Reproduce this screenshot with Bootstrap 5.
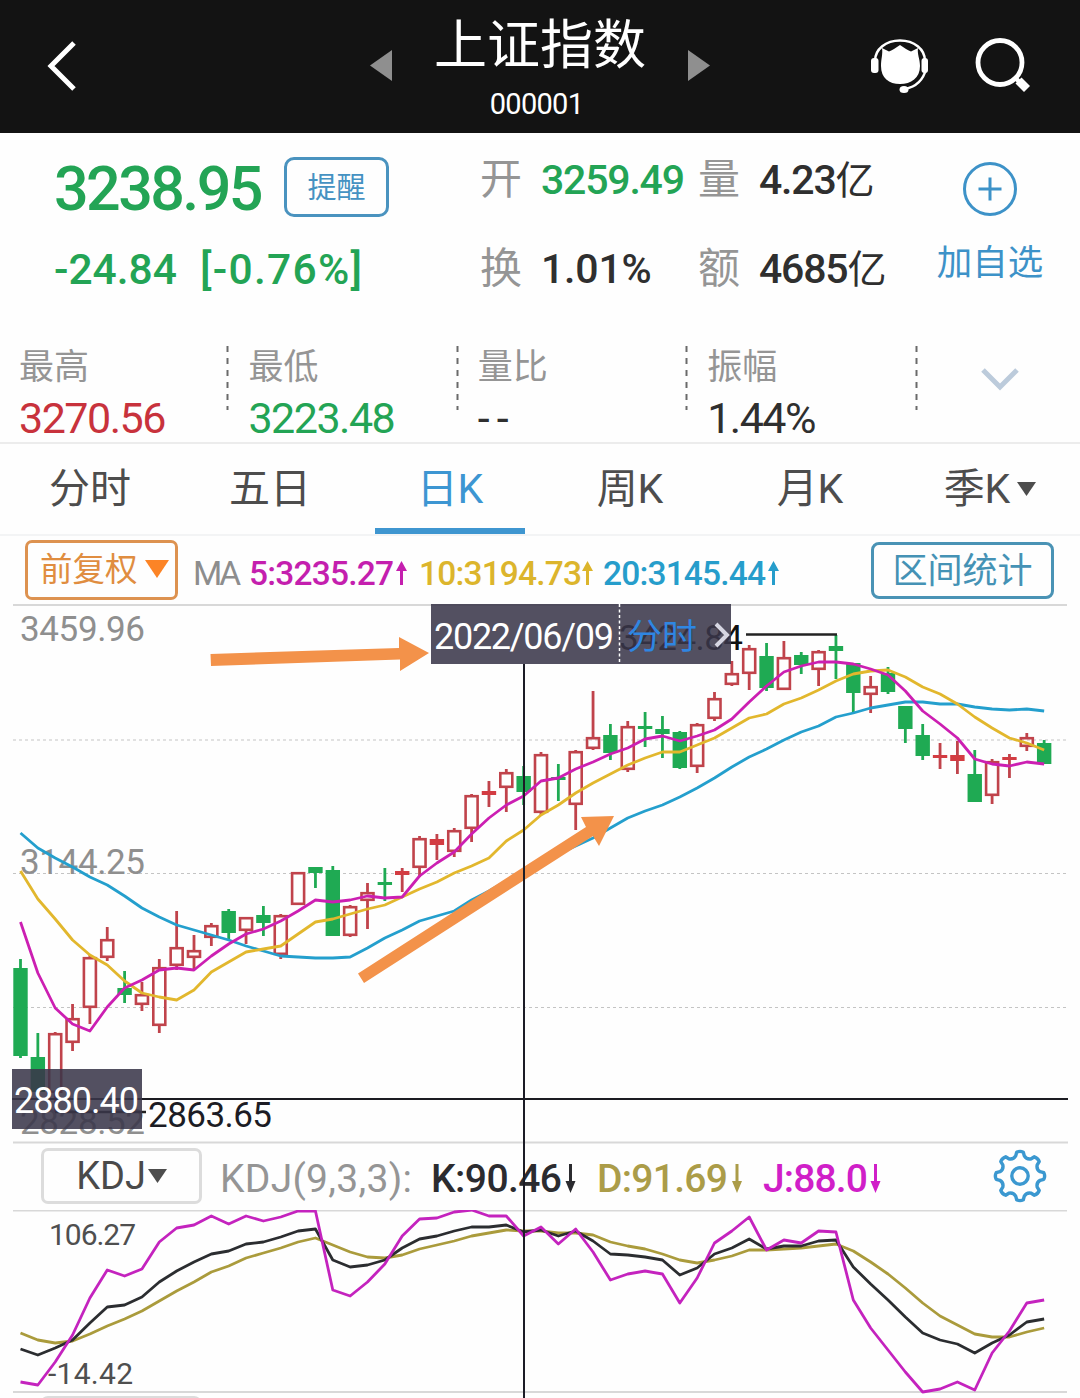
<!DOCTYPE html>
<html lang="zh-CN">
<head>
<meta charset="utf-8">
<meta name="viewport" content="width=device-width, initial-scale=1">
<title>上证指数 000001</title>
<link href="https://cdn.jsdelivr.net/npm/bootstrap@5.3.0/dist/css/bootstrap.min.css" rel="stylesheet">
<style>
body{font-family:Roboto,"Noto Sans CJK SC",sans-serif;color:#2f2f2f;background:#fefefe;line-height:1;width:1080px;height:1398px;overflow:hidden}
svg{display:block;flex:none}
.topbar{height:133px;background:#131313;color:#fff}
.side{width:370px}
.ttl{font-size:53px;line-height:60px;padding-top:16px}
.code{font-size:29px;line-height:30px;letter-spacing:-.7px;margin-top:13px;text-indent:-7px}
.up{color:#c8323c}.down{color:#23a455}.mute{color:#959595}.sky{color:#3d92c8}
.quote{height:213px}
.q-left{width:480px;padding:24px 0 0 54px}
.q-price{font-size:61px;line-height:64px;letter-spacing:-2.6px;font-weight:500;width:230px}
.q-remind{width:105px;height:60px;border:3px solid #4a93bf;border-radius:10px;color:#4592c2;font-size:29px;line-height:57px}
.q-chg{font-size:42.5px;line-height:46px;margin-top:26px;font-weight:500}
.q-chg span:last-child{margin-left:23px;letter-spacing:1.3px}
.q-grid{padding-top:26px;font-size:41px;font-weight:500}
.q-grid .line{height:42px;margin-bottom:47px;line-height:42px}
.q-grid .cap{font-size:42px;font-weight:400;width:61px}
.q-grid .val{letter-spacing:-1.2px;white-space:nowrap}
.q-grid .wide{letter-spacing:-.2px}
.q-grid .cn{font-size:39px;font-weight:400}
.c1{width:218px}.c2{width:228px}
.q-add{width:128px;padding-top:28px;font-size:35.5px}
.stats{height:98px;padding-left:19px;border-bottom:2px solid #ececec}
.stat{width:229.4px}
.stat .lab{font-size:35px;line-height:44px}
.stat .num{font-size:43px;line-height:46px;letter-spacing:-1.5px;margin-top:5px}
.stat .dash{letter-spacing:7px}
.stat svg{margin-left:auto;margin-right:19px}
.tabs{height:92px;border-bottom:2px solid #f3f4f5;font-size:41px;color:#4d4d4d}
.tabs a{width:180px;color:inherit;text-decoration:none;height:90px;line-height:91px}
.tabs a.on{color:#3d96d2}
.tabs a.on::after{content:"";position:absolute;left:15px;right:15px;bottom:0;height:6px;background:#3f96d0}
.marow{height:68px;padding-left:25px}
.adj{width:153px;height:60px;border:3px solid #dd9250;border-radius:7px;color:#e08d40;font-size:32.5px;line-height:58px}
.rng{width:183px;height:57px;border:3px solid #4a93b5;border-radius:8px;color:#4592b5;font-size:35px;line-height:53px}
.kdjrow{height:66px;padding-left:41px;font-size:38px}
.sel{width:161px;height:56px;border:3px solid #dcdcdc;border-radius:7px;color:#4a4a4a;line-height:54px}
.chart{position:relative}
.cross{position:absolute;left:523px;top:60px;bottom:0;width:2px;background:#1c1c26}
svg text{font-family:Roboto,"Noto Sans CJK SC",sans-serif}
</style>
<script src="https://cdn.jsdelivr.net/npm/bootstrap@5.3.0/dist/js/bootstrap.bundle.min.js"></script>
</head>
<body>
<header class="topbar d-flex">
  <div class="side d-flex align-items-center">
    <svg width="40" height="56" viewBox="0 1 40 56" style="margin-left:44px"><path d="M30 5 7 28l23 23" fill="none" stroke="#fff" stroke-width="5"/></svg>
  </div>
  <svg class="align-self-center" width="22" height="34" viewBox="0 0 22 34"><path d="M22 0v31L0 15.500z" fill="#8f8f8f"/></svg>
  <div class="text-center flex-grow-1"><div class="ttl">上证指数</div><div class="code">000001</div></div>
  <svg class="align-self-center" width="22" height="34" viewBox="0 0 22 34"><path d="M0 0v31L22 15.500z" fill="#8f8f8f"/></svg>
  <div class="side d-flex align-items-center">
    <svg width="60" height="60" viewBox="870 36 60 60" style="margin-left:160px"><path d="M882 47l7 3.500q2-1 5-2.500l6-4 6 4q3 1.500 5 2.500l7-3.500c-1 6 2 11 2 18 0 12-9 18-20 18s-19-6-19-18c0-7 2-12 1-18z" fill="#fff"/><path d="M875 60c0-12 11-20.500 25-20.500S925 48 925 60M926 68c-3 12-11 18-21 20" fill="none" stroke="#fff" stroke-width="2.500"/><rect x="871" y="57" width="7.500" height="15" rx="3" fill="#fff"/><rect x="921.500" y="57" width="6.500" height="15" rx="3" fill="#fff"/><ellipse cx="904" cy="88.500" rx="4.500" ry="3.500" fill="#fff"/></svg>
    <svg width="60" height="60" viewBox="974 36 60 60" style="margin-left:44px"><circle cx="1000" cy="61.500" r="22" fill="none" stroke="#fff" stroke-width="4.800"/><path d="M1014.500 76l6 6" stroke="#fff" stroke-width="4.500"/><path d="M1018.500 79.500l8.500 8.500" stroke="#fff" stroke-width="8.500"/></svg>
  </div>
</header>

<section class="quote d-flex">
  <div class="q-left">
    <div class="d-flex"><div class="q-price down">3238.95</div><div class="q-remind text-center">提醒</div></div>
    <div class="q-chg down"><span>-24.84</span><span>[-0.76%]</span></div>
  </div>
  <div class="q-grid">
    <div class="d-flex line"><div class="c1 d-flex"><span class="cap mute">开</span><span class="val down">3259.49</span></div><div class="c2 d-flex"><span class="cap mute">量</span><span class="val">4.23<span class="cn">亿</span></span></div></div>
    <div class="d-flex line"><div class="c1 d-flex"><span class="cap mute">换</span><span class="val wide">1.01%</span></div><div class="c2 d-flex"><span class="cap mute">额</span><span class="val">4685<span class="cn">亿</span></span></div></div>
  </div>
  <div class="q-add sky text-center">
    <svg class="mx-auto" width="56" height="56" viewBox="0 0 56 56"><g fill="none" stroke="#3d92c8" stroke-width="3"><circle cx="28" cy="28" r="25.500"/><path d="M28 16.500v23M16.500 28h23"/></g></svg>
    <div style="line-height:38px;margin-top:27px">加自选</div>
  </div>
</section>

<section class="stats d-flex" id="stats"></section>

<nav class="tabs d-flex text-center">
  <a href="#">分时</a><a href="#">五日</a><a href="#" class="on position-relative">日K</a><a href="#">周K</a><a href="#">月K</a>
  <a href="#" class="d-flex justify-content-center align-items-center" style="line-height:97px">季K<svg width="19" height="14" viewBox="0 0 19 14" style="margin-left:7px"><path d="M0 0h19l-9.500 14z" fill="#4d4d4d"/></svg></a>
</nav>

<section class="marow d-flex">
  <div class="adj d-flex align-items-center mt-1"><span style="margin-left:12px">前复权</span><svg width="24" height="18" viewBox="0 0 24 18" style="margin:-3px 0 0 7px"><path d="M0 0h24L12 18z" fill="#fc8426"/></svg></div>
  <svg width="600" height="68" viewBox="180 536 600 68" style="margin-left:2px" font-size="33.500" font-weight="500">
    <text x="193" y="585" fill="#8d8d8d" font-weight="400" textLength="48">MA</text>
    <g fill="#c41fae"><text x="249" y="585" textLength="145">5:3235.27</text><path d="M400 585v-14h-4l5.500-10 5.500 10h-4v14z"/></g>
    <g fill="#dcb52c"><text x="419" y="585" textLength="163">10:3194.73</text><path d="M586 585v-14h-4l5.500-10 5.500 10h-4v14z"/></g>
    <g fill="#269dcb"><text x="603" y="585" textLength="163">20:3145.44</text><path d="M772 585v-14h-4l5.500-10 5.500 10h-4v14z"/></g>
  </svg>
  <div class="rng text-center ms-auto" style="margin:6px 26px 0 0">区间统计</div>
</section>

<main class="chart">
  <svg id="price" width="1080" height="540" viewBox="0 604 1080 540"></svg>
  <div class="kdjrow d-flex">
    <div class="sel d-flex align-items-center justify-content-center mt-1"><span>KDJ</span><svg width="19" height="14" viewBox="0 0 19 14" style="margin-left:2px"><path d="M0 0h19l-9.500 14z" fill="#4d4d4d"/></svg></div>
    <svg width="700" height="66" viewBox="210 1144 700 66" style="margin-left:8px" font-size="39" font-weight="500">
      <text x="220" y="1192" fill="#959595" font-weight="400" textLength="192">KDJ(9,3,3):</text>
      <g fill="#2b2b2f"><text x="431" y="1192" textLength="131">K:90.46</text><path d="M569 1164v17h-3.500l5 12 5-12H572v-17z"/></g>
      <g fill="#ab9c48"><text x="597" y="1192" textLength="131">D:91.69</text><path d="M735.500 1164v17h-3.500l5 12 5-12h-3.500v-17z"/></g>
      <g fill="#d01fc8"><text x="763" y="1192" textLength="105">J:88.0</text><path d="M874 1164v17h-3.500l5 12 5-12H877v-17z"/></g>
    </svg>
    <svg id="gear" width="54" height="54" viewBox="-27 -27 54 54" class="ms-auto" style="margin:5px 33px 0 0"></svg>
  </div>
  <svg id="kdj" width="1080" height="188" viewBox="0 1210 1080 188"></svg>
  <div class="cross"></div>
</main>

<script>
const X = i => 20.5 + 17.35 * i;

document.getElementById('stats').innerHTML = [['最高','3270.56','up'],['最低','3223.48','down'],['量比','--','dash'],['振幅','1.44%','']].map(s =>
  `<div class="stat d-flex"><div><div class="lab mute">${s[0]}</div><div class="num ${s[2]}">${s[1]}</div></div>
   <svg width="3" height="64" viewBox="0 0 3 64"><path d="M1.500 0v64" stroke="#6a6a6a" stroke-width="2" stroke-dasharray="6 6"/></svg></div>`).join('') +
  '<svg width="44" height="30" viewBox="0 0 44 30" style="margin:19px 0 0 41px"><path d="M5 5l17 17L39 5" fill="none" stroke="#bccbdb" stroke-width="5"/></svg>';

// each candle: direction, wick top, body top, body bottom, wick bottom
const candles = `G 959 968 1056 1058|G 1033 1057 1092 1098|R 1032 1033 1093 1112|R 1004 1018 1043 1051|R 955 957 1008 1024|R 927 939 958 961|G 971 988 995 1003|R 982 994 1005 1011|R 959 967 1026 1033|R 911 947 966 970|R 935 950 958 969|R 923 925 938 946|G 909 911 933 940|R 917 917 931 944|G 906 915 923 936|R 914 915 955 959|R 872 872 905 905|G 867 867 873 888|G 866 870 936 936|R 905 906 936 937|R 883 892 901 929|G 868 882 885 901|R 868 871 875 892|R 836 838 868 877|R 834 839 845 860|R 828 830 852 857|R 794 795 829 842|R 781 791 795 807|R 769 772 788 812|G 766 776 792 805|R 752 754 813 815|G 764 777 780 801|R 750 751 805 830|R 691 737 749 750|G 724 735 753 760|R 721 726 770 772|G 712 726 729 747|G 716 729 734 758|G 731 732 768 769|R 723 724 767 773|R 692 698 719 721|R 661 673 685 686|R 645 648 674 690|G 643 656 688 691|R 641 657 690 690|G 652 655 665 674|R 650 651 670 686|G 635 646 651 679|G 663 663 693 713|R 676 686 695 713|G 667 673 692 694|G 706 706 729 743|G 724 735 756 760|R 743 755 758 769|R 741 755 761 774|G 750 774 802 802|R 759 761 796 804|R 754 757 760 778|R 733 737 747 751|G 740 743 764 764`.split('|').map(s => s.split(' '));
const ma5 = [922,973,1008,1024,1031,1007,988,980,970,968,970,956,944,934,929,921,911,900,902,900,896,898,897,876,863,852,834,818,805,796,781,778,769,762,754,748,739,736,741,736,730,719,702,686,672,666,662,662,664,669,675,691,711,724,738,759,764,766,762,764];
const ma10 = [871,899,919,940,955,965,981,993,997,1000,990,972,962,952,949,946,934,922,919,914,909,905,897,889,882,873,866,858,841,830,815,805,793,783,774,765,758,752,752,745,738,728,718,714,704,698,690,681,674,671,670,677,687,694,704,717,728,738,743,750];
const ma20 = [833,848,858,867,877,885,896,908,917,925,930,935,940,946,951,956,957,958,958,957,948,938,930,921,916,911,900,891,881,870,862,854,846,838,828,818,811,805,797,788,778,767,757,749,740,732,726,717,713,708,705,702,702,704,704,707,709,710,709,711];
const J = [1382,1385,1362,1335,1298,1270,1276,1269,1242,1228,1225,1216,1224,1216,1221,1217,1211,1211,1290,1296,1282,1264,1236,1219,1218,1212,1210,1216,1216,1236,1227,1244,1229,1252,1280,1274,1271,1274,1303,1278,1243,1231,1217,1250,1240,1243,1231,1232,1300,1328,1350,1372,1392,1389,1382,1390,1353,1331,1303,1300];
const K = [1349,1355,1348,1340,1323,1307,1305,1297,1282,1271,1262,1254,1251,1244,1242,1237,1231,1229,1260,1267,1265,1260,1248,1239,1236,1231,1227,1227,1225,1232,1230,1236,1231,1241,1254,1255,1257,1260,1275,1268,1254,1248,1239,1249,1246,1246,1241,1240,1267,1284,1300,1317,1333,1340,1344,1353,1343,1335,1322,1319];
const D = [1333,1340,1343,1341,1334,1326,1319,1311,1301,1291,1282,1272,1266,1258,1253,1248,1242,1238,1245,1252,1257,1258,1255,1249,1245,1241,1236,1233,1230,1231,1231,1233,1233,1235,1242,1246,1249,1254,1260,1263,1260,1256,1250,1250,1249,1248,1246,1244,1251,1262,1274,1288,1303,1316,1325,1334,1337,1337,1332,1328];
const line = (a, c) => `<polyline points="${a.map((y, i) => X(i) + ',' + y).join(' ')}" fill="none" stroke="${c}" stroke-width="2.8" stroke-linejoin="round"/>`;
const label = (x, y, t, w, c, s) => `<text x="${x}" y="${y}" font-size="${s || 35}" fill="${c}" textLength="${w}">${t}</text>`;

let p = '<path d="M13 605H1067M13 1142.500H1068" stroke="#d8d8d8" stroke-width="2"/><path d="M13 740H1067M13 873.500H1067M13 1007.500H1067" stroke="#c4c4c4" stroke-width="1.2" stroke-dasharray="3 3"/>';
p += label(20, 640.5, '3459.96', 125, '#8f8f8f') + label(20, 874, '3144.25', 125, '#8f8f8f') + label(20, 1134, '2828.52', 125, '#8f8f8f');
candles.forEach(([d, h, t, b, l], i) => {
  const x = X(i), w = 14.4; h = +h; t = +t; b = +b; l = +l;
  if (d === 'G') p += `<path d="M${x} ${h}V${l}" stroke="#1faa53" stroke-width="2.8"/><rect x="${x - 7.2}" y="${t}" width="${w}" height="${b - t}" fill="#1faa53"/>`;
  else {
    p += `<path d="M${x} ${h}V${t}M${x} ${b}V${l}" stroke="#c0434b" stroke-width="2.8"/>`;
    p += b - t < 7 ? `<rect x="${x - 7.2}" y="${t}" width="${w}" height="${b - t}" fill="#d33c42"/>`
      : `<rect x="${x - 6}" y="${t + 1.2}" width="12" height="${b - t - 2.4}" fill="none" stroke="#c0434b" stroke-width="2.6"/>`;
  }
});
p += line(ma20, '#249fcd') + line(ma10, '#e2b72d') + line(ma5, '#cc1fb2');
p += '<path d="M746 634.500H837M55 1112H146" stroke="#232323" stroke-width="2.600"/><path d="M12 1099H1068" stroke="#1c1c22" stroke-width="2"/>';
p += label(619, 650, '3424.84', 124, '#111') + label(148, 1127, '2863.65', 124, '#1c1c24');
p += '<g fill="#f3924a"><path d="M210.500 654L399 648 399 637 429 653 400 671 400 659.500 211 666z"/><path d="M358 973.500L586 827 581 817 614 816 599 846 593 836 364 983z"/></g>';
p += '<rect x="431" y="604" width="300" height="60" fill="#39364a" fill-opacity=".87"/><path d="M619.500 604v60" stroke="#fff" stroke-width="1.500" stroke-dasharray="3 2.500"/>';
p += label(434, 648.500, '2022/06/09', 180, '#fff', 36) + label(627, 648.500, '分时', 70, '#2f86e2', 35);
p += '<path d="M716 624l11 11-11 11" fill="none" stroke="#d6d6e2" stroke-width="4"/>';
p += '<rect x="12" y="1069" width="130" height="60" fill="#39364a" fill-opacity=".87"/>' + label(14, 1113, '2880.40', 125, '#fff', 36);
document.getElementById('price').innerHTML = p;

document.getElementById('kdj').innerHTML = '<path d="M13 1210.500H1067M13 1392H1067" stroke="#d8d8d8" stroke-width="2"/><rect x="41" y="1397" width="160" height="50" rx="7" fill="none" stroke="#dcdcdc" stroke-width="2"/>' +
  label(49, 1245, '106.27', 87, '#4f4f4f', 30) + label(48, 1384, '-14.42', 85, '#4f4f4f', 30) + line(D, '#aa9b3c') + line(K, '#2b2d30') + line(J, '#c423be');

// gear outline: eight rounded teeth with concave gaps between them
let g = '';
for (let k = 0; k < 8; k++) {
  const pt = (r, a) => { const t = (k * 45 - 90 + a) * Math.PI / 180; return (r * Math.cos(t)).toFixed(1) + ' ' + (r * Math.sin(t)).toFixed(1); };
  g += (g ? 'L' : 'M') + pt(20.5, -12) + 'L' + pt(24, -8) + 'Q' + pt(25.5, 0) + ' ' + pt(24, 8) + 'L' + pt(20.5, 12) + 'Q' + pt(17.5, 22.5) + ' ' + pt(20.5, 33);
}
document.getElementById('gear').innerHTML = `<g fill="none" stroke="#3b98d0" stroke-width="3.4" stroke-linejoin="round"><path d="${g}Z"/><circle r="8.2"/></g>`;
</script>
</body>
</html>
